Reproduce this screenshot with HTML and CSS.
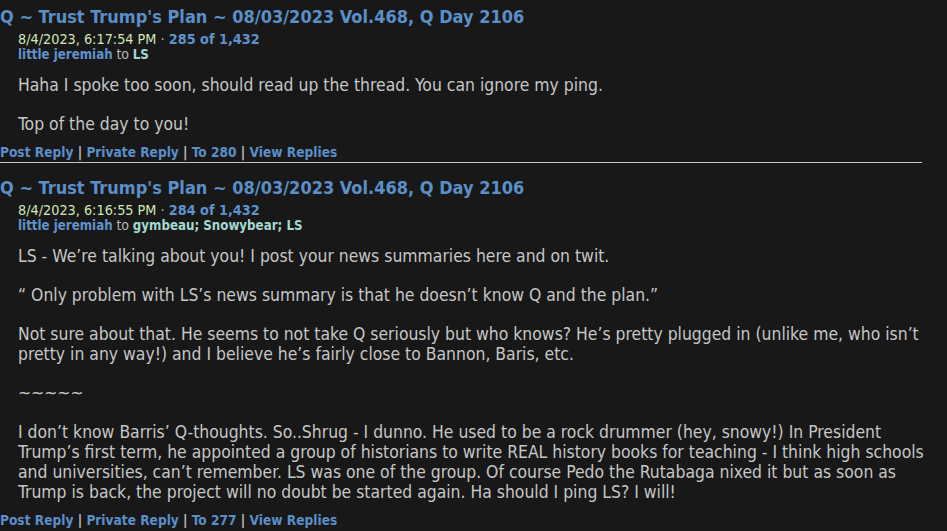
FILE: index.html
```html
<!DOCTYPE html>
<html lang="en">
<head>
    <meta charset="UTF-8">
    <meta name="viewport" content="width=device-width, initial-scale=1.0">
    <title>Q ~ Trust Trump's Plan ~ 08/03/2023 Vol.468, Q Day 2106</title>
    <link rel="stylesheet" href="styles.css">
</head>
<body>

<div class="thread">

    <div class="post">
        <div class="post-title"><a href="#">Q ~ Trust Trump's Plan ~ 08/03/2023 Vol.468, Q Day 2106</a></div>
        <div class="post-meta">
            <div class="stamp"><span class="date">8/4/2023, 6:17:54 PM</span> <span class="dot">&middot;</span> <a class="num" href="#">285 of 1,432</a></div>
            <div class="byline"><a class="author" href="#">little jeremiah</a> <span class="to">to</span> <span class="recipient">LS</span></div>
        </div>
        <div class="post-body">
            <p>Haha I spoke too soon, should read up the thread. You can ignore my ping.</p>
            <p>Top of the day to you!</p>
        </div>
        <div class="post-links">
            <a href="#">Post Reply</a> | <a href="#">Private Reply</a> | <a href="#">To 280</a> | <a href="#">View Replies</a>
        </div>
    </div>

    <hr class="divider">

    <div class="post">
        <div class="post-title"><a href="#">Q ~ Trust Trump's Plan ~ 08/03/2023 Vol.468, Q Day 2106</a></div>
        <div class="post-meta">
            <div class="stamp"><span class="date">8/4/2023, 6:16:55 PM</span> <span class="dot">&middot;</span> <a class="num" href="#">284 of 1,432</a></div>
            <div class="byline"><a class="author" href="#">little jeremiah</a> <span class="to">to</span> <span class="recipient">gymbeau; Snowybear; LS</span></div>
        </div>
        <div class="post-body">
            <p>LS - We&rsquo;re talking about you! I post your news summaries here and on twit.</p>
            <p>&ldquo; Only problem with LS&rsquo;s news summary is that he doesn&rsquo;t know Q and the plan.&rdquo;</p>
            <p>Not sure about that. He seems to not take Q seriously but who knows? He&rsquo;s pretty plugged in (unlike me, who isn&rsquo;t pretty in any way!) and I believe he&rsquo;s fairly close to Bannon, Baris, etc.</p>
            <p>~~~~~</p>
            <p>I don&rsquo;t know Barris&rsquo; Q-thoughts. So..Shrug - I dunno. He used to be a rock drummer (hey, snowy!) In President Trump&rsquo;s first term, he appointed a group of historians to write REAL history books for teaching - I think high schools and universities, can&rsquo;t remember. LS was one of the group. Of course Pedo the Rutabaga nixed it but as soon as Trump is back, the project will no doubt be started again. Ha should I ping LS? I will!</p>
        </div>
        <div class="post-links">
            <a href="#">Post Reply</a> | <a href="#">Private Reply</a> | <a href="#">To 277</a> | <a href="#">View Replies</a>
        </div>
    </div>

</div>

</body>
</html>
```
FILE: styles.css
```css
body {
    margin: 0;
    background-color: #181818;
    color: #c6c6c6;
    font-family: 'DejaVu Sans Condensed', 'DejaVu Sans', sans-serif;
}

a {
    text-decoration: none;
}

.thread {
    width: 936px;
}

.post {
    padding-top: 5px;
}

.post-title {
    font-size: 18px;
    font-weight: bold;
    line-height: 24px;
}

.post-title a {
    color: #5a8fc8;
}

.post-meta {
    margin-top: 3px;
    padding-left: 18px;
    line-height: 15px;
}

.stamp {
    font-size: 14.3px;
}

.byline {
    font-size: 13.2px;
}

.date {
    color: #d0e6b6;
}

.dot {
    color: #b8b8b8;
}

.num,
.author {
    color: #5f93cc;
    font-weight: bold;
}

.to {
    color: #b8b8b8;
    font-size: 14px;
}

.recipient {
    color: #a4d8d0;
    font-weight: bold;
}

.post-body {
    padding-left: 18px;
    margin-top: 13px;
    font-size: 17.4px;
    line-height: 20px;
}

.post-body p {
    margin: 0 0 19px 0;
}

.post-body p:last-child {
    margin-bottom: 0;
}

.post-links {
    margin-top: 11px;
    font-size: 13.6px;
    line-height: 15px;
    font-weight: bold;
    color: #c0c0c0;
}

.post-links a {
    color: #5b8fc9;
}

.divider {
    width: 922px;
    border: 0;
    height: 1px;
    background-color: #bccac2;
    margin: 2px 0 8px 0;
}
```
